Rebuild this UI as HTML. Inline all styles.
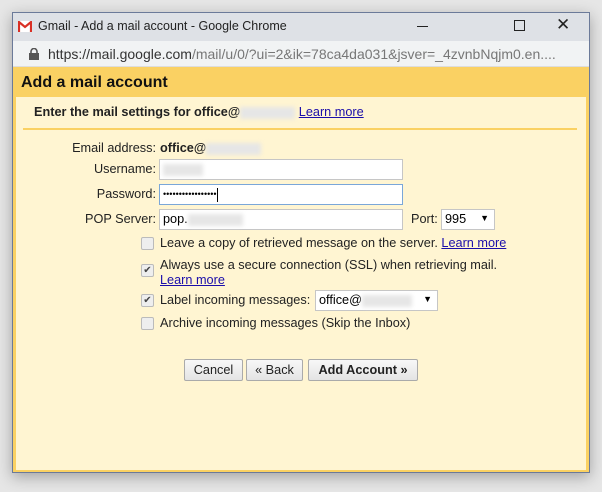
<!DOCTYPE html>
<html><head><style>
*{box-sizing:border-box;margin:0;padding:0}
body{width:602px;height:492px;background:#e6e6e6;font-family:"Liberation Sans",Arial,sans-serif;position:relative;overflow:hidden}
.win{position:absolute;left:12px;top:12px;width:578px;height:461px;border:1px solid #6b7a99;box-shadow:0 4px 14px rgba(0,0,0,.3);background:#fad163}
.title{position:absolute;left:0;top:0;width:576px;height:28px;background:#dee1e6}
.addr{position:absolute;left:0;top:28px;width:576px;height:26px;background:#f1f3f4;border-bottom:1px solid #ddd}
.abs{position:absolute;white-space:nowrap}
.cream{position:absolute;left:3px;top:84px;width:570px;height:373px;background:#fff5d2}
.lbl{position:absolute;font-size:12.7px;color:#222;text-align:right;width:150px}
.inp{position:absolute;height:21px;background:#fff;border:1px solid #c6c6c6;font-size:12.7px;padding:2px 3px}
.cb{position:absolute;width:13px;height:13px;border:1px solid #bbb;border-radius:2px;background:#eee}
.t{position:absolute;font-size:12.7px;color:#222;white-space:nowrap}
a{color:#1a0dab;text-decoration:underline}
.btn{position:absolute;top:358px;height:22px;border:1px solid #aaa;background:linear-gradient(#f8f8f8,#e4e4e4);font-size:12.7px;text-align:center;line-height:20px;color:#222;border-radius:2px}
.blur{display:inline-block;background:#e6e6e6;filter:blur(2px);height:12px;vertical-align:middle}
</style></head><body>
<div class="win">
 <div class="title">
  <svg class="abs" style="left:5px;top:8px" width="14" height="11" viewBox="0 0 14 11"><rect width="14" height="11" fill="#fff"/><path d="M1 11V1l6 5 6-5v10" stroke="#d93025" stroke-width="2.2" fill="none"/></svg>
  <div class="abs" style="left:25px;top:6px;font-size:12.5px;color:#222">Gmail - Add a mail account - Google Chrome</div>
  <div class="abs" style="left:404px;top:13px;width:11px;height:1px;background:#222"></div>
  <div class="abs" style="left:501px;top:7px;width:11px;height:11px;border:1px solid #222"></div>
  <div class="abs" style="left:543px;top:2px;font-size:17px;color:#222">✕</div>
 </div>
 <div class="addr">
  <svg class="abs" style="left:16px;top:7px" width="10" height="12" viewBox="0 0 10 12"><rect x="0" y="5" width="10" height="7" fill="#555"/><path d="M2 5V3.5a3 3 0 016 0V5" stroke="#555" stroke-width="1.6" fill="none"/></svg>
  <div class="abs" style="left:35px;top:5px;font-size:14px;color:#777"><span style="color:#333">https://mail.google.com</span>/mail/u/0/?ui=2&amp;ik=78ca4da031&amp;jsver=_4zvnbNqjm0.en....</div>
 </div>
 <div class="abs" style="left:8px;top:61px;font-size:16px;font-weight:bold;color:#111">Add a mail account</div>
 <div class="cream">
  <div class="t" style="left:18px;top:8px;font-weight:bold">Enter the mail settings for office@<span class="blur" style="width:55px"></span> <a style="font-weight:normal">Learn more</a></div>
  <div class="abs" style="left:7px;top:31px;width:554px;height:2px;background:#fad163"></div>
 </div>
 <div class="lbl" style="left:-7px;top:128px">Email address:</div>
 <div class="t" style="left:147px;top:128px;font-weight:bold">office@<span class="blur" style="width:55px"></span></div>
 <div class="lbl" style="left:-7px;top:149px">Username:</div>
 <div class="inp" style="left:146px;top:146px;width:244px"><span class="blur" style="width:40px"></span></div>
 <div class="lbl" style="left:-7px;top:174px">Password:</div>
 <div class="inp" style="left:146px;top:171px;width:244px;border-color:#7aa7d9;font-size:9px;line-height:15px">•••••••••••••••••<span style="display:inline-block;width:1px;height:14px;background:#000;vertical-align:middle"></span></div>
 <div class="lbl" style="left:-7px;top:199px">POP Server:</div>
 <div class="inp" style="left:146px;top:196px;width:244px">pop.<span class="blur" style="width:55px"></span></div>
 <div class="t" style="left:398px;top:199px">Port:</div>
 <div class="inp" style="left:428px;top:196px;width:54px">995<span style="position:absolute;right:5px;top:3px;font-size:9px">▼</span></div>
 <div class="cb" style="left:128px;top:224px"></div>
 <div class="t" style="left:147px;top:223px">Leave a copy of retrieved message on the server. <a>Learn more</a></div>
 <div class="cb" style="left:128px;top:251px;font-size:10px;line-height:11px;text-align:center;color:#444">✔</div>
 <div class="t" style="left:147px;top:245px;line-height:15px">Always use a secure connection (SSL) when retrieving mail.<br><a>Learn more</a></div>
 <div class="cb" style="left:128px;top:281px;font-size:10px;line-height:11px;text-align:center;color:#444">✔</div>
 <div class="t" style="left:147px;top:280px">Label incoming messages:</div>
 <div class="inp" style="left:302px;top:277px;width:123px">office@<span class="blur" style="width:50px"></span><span style="position:absolute;right:5px;top:3px;font-size:9px">▼</span></div>
 <div class="cb" style="left:128px;top:304px"></div>
 <div class="t" style="left:147px;top:303px">Archive incoming messages (Skip the Inbox)</div>
 <div class="btn" style="left:171px;top:346px;width:59px">Cancel</div>
 <div class="btn" style="left:233px;top:346px;width:57px">« Back</div>
 <div class="btn" style="left:295px;top:346px;width:110px;font-weight:bold">Add Account »</div>
</div>
</body></html>
